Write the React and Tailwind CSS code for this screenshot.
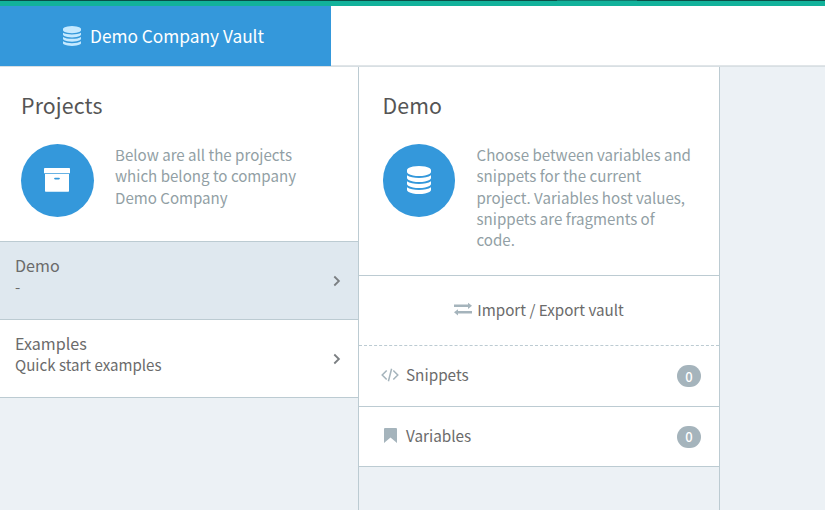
import React from "react";

function Database({ className }) {
  return (
    <svg viewBox="0 0 1536 1792" preserveAspectRatio="none" className={className} fill="currentColor">
      <path d="M768 768q237 0 443-43t325-127v170q0 69-103 128t-280 93.5-385 34.5-385-34.5-280-93.5-103-128v-170q119 84 325 127t443 43zm0 768q237 0 443-43t325-127v170q0 69-103 128t-280 93.5-385 34.5-385-34.5-280-93.5-103-128v-170q119 84 325 127t443 43zm0-384q237 0 443-43t325-127v170q0 69-103 128t-280 93.5-385 34.5-385-34.5-280-93.5-103-128v-170q119 84 325 127t443 43zm0-1152q208 0 385 34.5t280 93.5 103 128v128q0 69-103 128t-280 93.5-385 34.5-385-34.5-280-93.5-103-128v-128q0-69 103-128t280-93.5 385-34.5z" />
    </svg>
  );
}

function Archive() {
  return (
    <svg viewBox="0 0 26 24" className="h-6 w-[26px]" fill="currentColor">
      <path d="M.7 0h24.6q.7 0 .7.7v4.6H0V.7Q0 0 .7 0z" />
      <path fillRule="evenodd" d="M1 6h24v17q0 .7-.7.7H1.700q-.7 0-.7-.7zM11 9.800q-.9 0-.9.800t.9.800h4q.9 0 .9-.8t-.9-.8z" />
    </svg>
  );
}

function Exchange() {
  return (
    <svg viewBox="0 0 18 14" className="h-3.5 w-[18px] shrink-0" fill="currentColor">
      <path d="M0 2.500h14V.7L18 3.800l-4 3.100V5H0zM18 11.600H4v1.800L0 10.300l4-3.100V9.100h14z" />
    </svg>
  );
}

function Code() {
  return (
    <svg viewBox="0 0 18 14" className="h-3.5 w-[18px]" fill="none" stroke="currentColor" strokeWidth="1.5">
      <path d="M5.700 2.500 1.200 7l4.500 4.500M12.300 2.500 16.800 7l-4.500 4.500M10.600.8 7.400 13.200" />
    </svg>
  );
}

function Bookmark() {
  return (
    <svg viewBox="0 0 13 15" className="h-[15px] w-[13px]" fill="currentColor">
      <path d="M1 0h11q1 0 1 1v14l-6.500-5.500L0 15V1q0-1 1-1z" />
    </svg>
  );
}

function Chevron() {
  return (
    <svg viewBox="0 0 8 12" className="h-3 w-2" fill="none" stroke="#7b7f82" strokeWidth="1.8">
      <path d="M1.300 1.500 5.900 6l-4.600 4.500" />
    </svg>
  );
}

function Intro({ title, icon, children, className }) {
  return (
    <section className={`border-b border-[#bccbd2] bg-white pt-[23px] ${className}`}>
      <h2 className="text-[21.300px] leading-[30px] tracking-[0.15px] text-[#555]">{title}</h2>
      <div className="mt-[24px] flex">
        <div className="flex size-[72.500px] shrink-0 items-center justify-center rounded-full bg-[#3498db] text-white">{icon}</div>
        <p className="ml-[21.500px] text-[15.100px] leading-[21.250px] whitespace-nowrap text-[#929fa5]">{children}</p>
      </div>
    </section>
  );
}

function Project({ name, detail, active }) {
  return (
    <li className={`flex h-[78px] items-center justify-between border-b border-[#bccbd2] pr-[17px] pl-[15px] ${active ? "bg-[#dfe8ef]" : "bg-white"}`}>
      <div className="-mt-2.5 text-[15.100px] leading-[21px] text-[#6b6b6b]">
        <div className="text-[16.100px] leading-[21px]">{name}</div>
        <div>{detail}</div>
      </div>
      <Chevron />
    </li>
  );
}

function Row({ icon, label, className }) {
  return (
    <li className={`flex items-center border-b border-[#bccbd2] bg-white pr-[18px] pl-[22px] ${className}`}>
      <span className="-mt-[3px] flex w-[18px] justify-center text-[#a5b4bc]">{icon}</span>
      <span className="-mt-1 ml-[7px] text-[15.300px] leading-5 text-[#6b6b6b]">{label}</span>
      <span className="ml-auto flex h-[22px] w-6 items-center justify-center rounded-full bg-[#a5b4bc] text-[13px] leading-none font-medium text-white">0</span>
    </li>
  );
}

export default function App() {
  return (
    <div className="flex h-[510px] w-[825px] flex-col overflow-hidden bg-[#ecf1f5] font-['Noto_Sans_CJK_SC',sans-serif]">
      <div className="h-1.5 shrink-0 border-t border-[#0b4f48] bg-[#12b29b]">
        <div className="-mt-px ml-[557px] h-px w-20 bg-[#10786c]" />
      </div>
      <header className="flex h-[60px] shrink-0 bg-white">
        <div className="flex w-[330.500px] items-center bg-[#3498db] pl-[63px] text-white">
          <Database className="h-5 w-[18px] text-[#c5e9ff]" />
          <span className="ml-[9px] text-[17.300px] leading-6">Demo Company Vault</span>
        </div>
        <div className="flex-1 border-b border-[#e0e5e8]" />
      </header>
      <main className="flex flex-1 border-t border-[#d8dfe3]">
        <div className="w-[359px] border-r border-[#bccbd2]">
          <Intro title="Projects" icon={<Archive />} className="h-[175px] pl-[21px]">
            Below are all the projects<br />which belong to company<br />Demo Company
          </Intro>
          <ul>
            <Project name="Demo" detail="-" active />
            <Project name="Examples" detail="Quick start examples" />
          </ul>
        </div>
        <div className="w-[361px] border-r border-[#bccbd2]">
          <Intro title="Demo" icon={<Database className="h-7 w-6" />} className="h-[209px] pl-[23.500px]">
            Choose between variables and<br />snippets for the current<br />project. Variables host values,<br />snippets are fragments of<br />code.
          </Intro>
          <div className="flex h-[70px] items-center justify-center gap-[5px] border-b border-dashed border-[#bccbd2] bg-white pb-[3px] text-[15.200px] leading-5 text-[#6b6b6b]">
            <span className="text-[#a5b4bc]"><Exchange /></span>
            Import / Export vault
          </div>
          <ul>
            <Row icon={<Code />} label="Snippets" className="h-[61px]" />
            <Row icon={<Bookmark />} label="Variables" className="h-[60px]" />
          </ul>
        </div>
      </main>
    </div>
  );
}
